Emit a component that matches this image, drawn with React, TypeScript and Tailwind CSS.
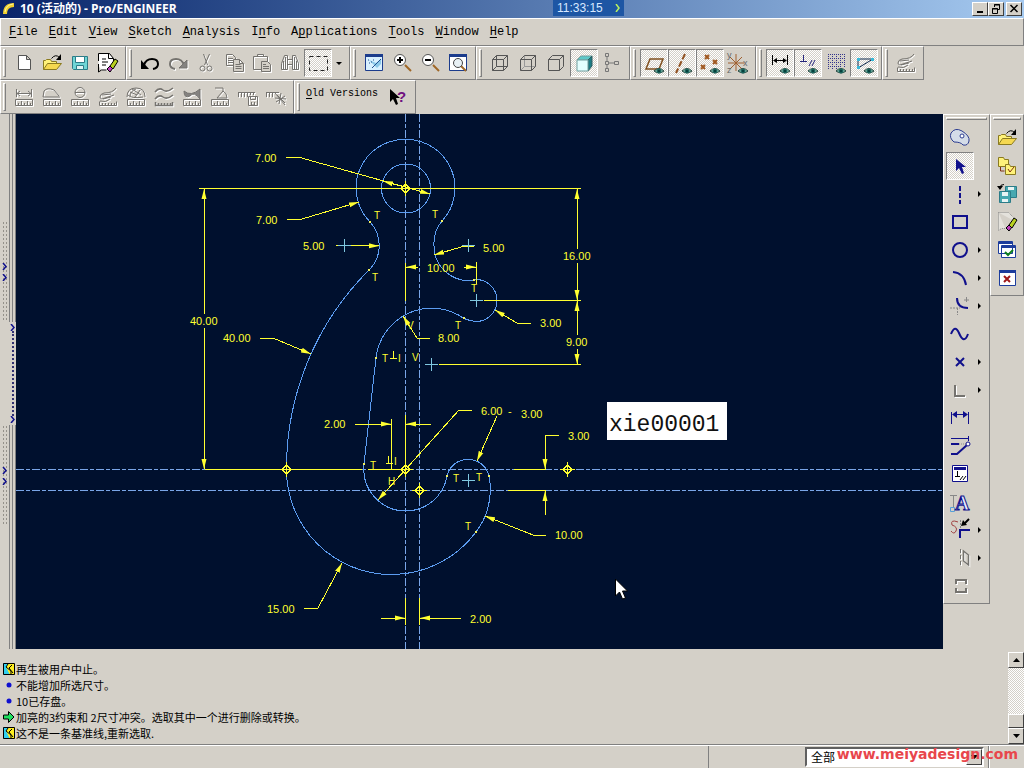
import type { ReactNode } from 'react';
import clsx from 'clsx';

type Tool = { label: string; icon: ReactNode; pressed?: boolean; disabled?: boolean; more?: boolean };

const DITHER = 'bg-[repeating-conic-gradient(#fff_0_25%,#d4d0c8_0_50%)] bg-[length:2px_2px]';
const RAISED = 'border border-t-white border-l-white border-r-[#404040] border-b-[#404040] bg-[#d4d0c8]';
const NAVY = '#10108c';

const ruler = (
    <>
        <path d="M5.5 16.5h17v6h-17z" />
        <path d="M8.5 20v2M11.5 18v4M14.5 20v2M17.5 18v4M20.5 20v2" />
    </>
);

const eye = (
    <>
        <path d="M14 22q5-5 10 0q-5 4-10 0" fill="#7fb8a8" stroke="#24463f" />
        <circle cx="19" cy="22" r="2" fill="#06403c" stroke="#1e6e66" />
    </>
);

const folder = (
    <>
        <path d="M5.5 20.5v-9h2l1-1h4l1 2h5v3" fill="#fff27a" stroke="#8a7a20" />
        <path d="M5.5 20.5l4-6h14l-5 6z" fill="#f5d850" stroke="#8a7a20" />
    </>
);

const curvedArrow = (
    <>
        <path d="M13.5 9.5q4-5 8-1" fill="none" stroke="#000" />
        <path d="M23 5v6h-5z" fill="#000" stroke="none" />
    </>
);

const eraser = (
    <>
        <path d="M13 20l3-3 3 2-3 4z" fill="#c040c0" stroke="#000" />
        <path d="M16 17l5-7 3 2-5 8z" fill="#b8d020" stroke="#000" />
    </>
);

const fileTools: Tool[] = [
    { label: 'New', icon: <path d="M8.5 6.5h8l4 4v10h-12zM16.5 6.5v4h4" fill="#fff" stroke="#555" /> },
    { label: 'Open', icon: <>{folder}{curvedArrow}</> },
    {
        label: 'Save',
        icon: (
            <>
                <path d="M6.5 7.5h15v13h-14l-1-1z" fill="#6fd6d6" stroke="#2c7c88" />
                <path d="M9.5 7.5h9v6h-9z" fill="#fff" stroke="#2c7c88" />
                <path d="M10.5 16.5h7v4h-7z" fill="#e0f4f4" stroke="#2c7c88" />
            </>
        ),
    },
    {
        label: 'Erase Not Displayed',
        icon: (
            <>
                <path d="M4.5 4.5h10l5 5v12h-12l-3-5z" fill="#fff" stroke="none" />
                <path d="M4.5 12v-7.5h11l4 5v3M14.5 4.5v5h5M4.5 15v8l3-2h5M8 10h4M8 13h6M8 16h4" fill="none" stroke="#000" />
                {eraser}
            </>
        ),
    },
];

const editTools: Tool[] = [
    {
        label: 'Undo',
        icon: (
            <>
                <path d="M8 16q2-6 8-6q6 0 6 5q0 4-5 5" fill="none" stroke="#000" strokeWidth="2" />
                <path d="M5 11v9h8z" fill="#000" stroke="none" />
            </>
        ),
    },
    {
        label: 'Redo',
        disabled: true,
        icon: (
            <>
                <path d="M20 16q-2-6-8-6q-6 0-6 5q0 4 5 5" strokeWidth="2" />
                <path d="M23 11v8h-8z" fill="#848280" />
            </>
        ),
    },
    {
        label: 'Cut',
        disabled: true,
        icon: (
            <>
                <path d="M11.5 5l4 11M17.5 5l-5 11" />
                <circle cx="10.5" cy="19.5" r="2.5" />
                <circle cx="17.5" cy="19.5" r="2.5" />
            </>
        ),
    },
    {
        label: 'Copy',
        disabled: true,
        icon: (
            <>
                <path d="M6.5 5.5h6l3 3v8h-9zM8 9.5h5M8 11.5h5M8 13.5h5" />
                <path d="M13.5 10.5h6l4 4v8h-10zM19.5 10.5v4h4M15.5 15.5h5M15.5 17.5h6M15.5 19.5h6" fill="#d4d0c8" />
            </>
        ),
    },
    {
        label: 'Paste',
        disabled: true,
        icon: (
            <>
                <path d="M5.5 7.5h14v13h-14zM9.5 7.5v-2h6v2z" />
                <path d="M13.5 12.5h6l3 3v7h-9zM15 15.5h3M15 17.5h6M15 19.5h6" fill="#d4d0c8" />
            </>
        ),
    },
    {
        label: 'Find',
        disabled: true,
        icon: (
            <>
                <path d="M5.5 20.5v-6l3-8h3v14zM22.5 20.5v-6l-3-8h-3v14zM11.5 10.5h5v5h-5z" />
                <path d="M7.5 12v8M9.5 8v12M20.5 12v8M18.5 8v12" />
            </>
        ),
    },
    {
        label: 'Select Box',
        pressed: true,
        icon: <path d="M5.5 7.5h18v14h-18z" fill="none" stroke="#222" strokeDasharray="4 3" />,
    },
];

const magnifier = (
    <>
        <path d="M17 16l6 6" stroke="#a06828" strokeWidth="2" />
        <circle cx="12" cy="11" r="5.5" fill="#fff" stroke="#555" />
    </>
);

const viewTools: Tool[] = [
    {
        label: 'Repaint',
        icon: (
            <>
                <path d="M5.5 5.5h17v16h-17z" fill="#d8f0ff" stroke="#1c3c8c" />
                <path d="M5 5h18v3h-18z" fill="#1c3c8c" stroke="none" />
                <path d="M9 11l8 8 4-4v-5l-5 4z" fill="#8cc8e8" stroke="none" />
                <path d="M21 10l-9 9M8 11h1M11 13h1M9 14h1M13 11h1" stroke="#205090" />
            </>
        ),
    },
    { label: 'Zoom In', icon: <>{magnifier}<path d="M9 11h6M12 8v6" stroke="#000" strokeWidth="2" /></> },
    { label: 'Zoom Out', icon: <>{magnifier}<path d="M9 11h6" stroke="#000" strokeWidth="2" /></> },
    {
        label: 'Refit',
        icon: (
            <>
                <path d="M5.5 5.5h17v16h-17z" fill="#fff" stroke="#1c3c8c" />
                <path d="M5 5h18v3h-18z" fill="#1c3c8c" stroke="none" />
                <path d="M17 17l5 5" stroke="#a06828" strokeWidth="2" />
                <circle cx="14" cy="14" r="4.5" fill="#e8f0f4" stroke="#444" />
            </>
        ),
    },
];

const cube = 'M6.5 10.5h11v11h-11zM6.5 10.5l4-4h11v11l-4 4M17.5 10.5l4-4';

const displayTools: Tool[] = [
    { label: 'Wireframe', icon: <path d={cube + 'M10.5 6.5v11h11M10.5 17.5l-4 4'} fill="none" stroke="#555" /> },
    {
        label: 'Hidden Line',
        icon: (
            <>
                <path d="M10.5 6.5v11h11M10.5 17.5l-4 4" fill="none" stroke="#999" />
                <path d={cube} fill="none" stroke="#555" />
            </>
        ),
    },
    { label: 'No Hidden', icon: <path d={cube} fill="none" stroke="#555" /> },
    {
        label: 'Shading',
        pressed: true,
        icon: (
            <>
                <path d="M7 11l4-4h11l-4 4z" fill="#5cc8c8" stroke="#70a0a0" />
                <path d="M18 11l4-4v10l-4 5z" fill="#1c7c84" stroke="#305c60" />
                <path d="M7 11h11v11h-11z" fill="#e4ffff" stroke="#70a0a0" />
            </>
        ),
    },
    {
        label: 'Model Tree',
        icon: (
            <path
                d="M7.5 4.5h3v3h-3zM7.5 12.5h3v3h-3zM7.5 19.5h3v3h-3zM16.5 12.5h4v3h-4zM9 7.5v5M9 15.5v4M10.5 14h6"
                fill="none"
                stroke="#777"
            />
        ),
    },
];

const datumTools: Tool[] = [
    { label: 'Datum Planes', pressed: true, icon: <><path d="M10 10h13l-4 10h-13z" fill="none" stroke="#805020" strokeWidth="1.5" />{eye}</> },
    { label: 'Datum Axes', pressed: true, icon: <><path d="M17 5l-9 19" stroke="#905020" strokeWidth="2" strokeDasharray="6 2" />{eye}</> },
    {
        label: 'Datum Points',
        pressed: true,
        icon: (
            <>
                <path d="M9 6l4 4M13 6l-4 4M17 11l4 4M21 11l-4 4M5 16l4 4M9 16l-4 4" stroke="#a05820" strokeWidth="2" />
                {eye}
            </>
        ),
    },
    {
        label: 'Coordinate Systems',
        icon: (
            <>
                <path d="M12 5v17M4 14h16M6 8l12 12M18 8l-12 12" stroke="#a06030" />
                <g fill="#666" stroke="none" fontSize="9" fontFamily="Liberation Sans">
                    <text x="3" y="9">y</text>
                    <text x="19" y="17">x</text>
                    <text x="3" y="24">z</text>
                </g>
                {eye}
            </>
        ),
    },
];

const sketchTools: Tool[] = [
    {
        label: 'Dimensions',
        pressed: true,
        icon: (
            <>
                <path d="M6.5 6v10M21.5 6v10M8 11.5h12" stroke="#000" />
                <path d="M7 11.5l4-2.5v5zM21 11.5l-4-2.5v5z" fill="#000" stroke="none" />
                {eye}
            </>
        ),
    },
    { label: 'Constraints', pressed: true, icon: <><path d="M9.5 6v7M6 12.5h7M15 17l3-6M18 17l3-6" stroke="#26267c" />{eye}</> },
    {
        label: 'Grid',
        icon: (
            <>
                <path d="M6 5.5h17M6 9.5h17M6 13.5h17M6 17.5h13M6.5 5v16M10.5 5v16M14.5 5v16M18.5 5v13M22.5 5v13" stroke="#33338c" strokeDasharray="1 1" />
                {eye}
            </>
        ),
    },
    {
        label: 'Vertices',
        pressed: true,
        icon: (
            <>
                <path d="M8 10h15l-15 9z" fill="none" stroke="#102c50" />
                <path d="M7 9h3v3h-3zM21 9h3v3h-3zM7 17h3v3h-3z" fill="#38b8d8" stroke="none" />
                {eye}
            </>
        ),
    },
];

const curveRuler = (
    <>
        <path d="M6 18q6 2 10-2M22 5q-3 5-12 5q-4 1-4 4q0 3 5 1l9-3M8 12l9-1M9 16l8-2" />
        <path d="M5.5 18.5v4h17v-4M8.5 20v2M11.5 20v2M14.5 20v2M17.5 20v2M20.5 20v2" />
    </>
);

const analyseTools: Tool[] = [{ label: 'Curve Analysis', disabled: true, icon: curveRuler }];

const measureTools: Tool[] = [
    { label: 'Distance', disabled: true, icon: <><path d="M6.5 6v8M21.5 6v8M7 10.5h14M10 8l-3 2.5 3 2.5M18 8l3 2.5-3 2.5" />{ruler}</> },
    { label: 'Angle', disabled: true, icon: <><path d="M5 14h17M6 8q3-4 10-1l5 6M6 8l-1 6" />{ruler}</> },
    { label: 'Diameter', disabled: true, icon: <><circle cx="14" cy="9.5" r="5" /><path d="M9 9.5h10" />{ruler}</> },
    { label: 'Curvature', disabled: true, icon: curveRuler },
    { label: 'Sections', disabled: true, icon: <><path d="M5 14q0-9 9-9q9 0 9 9M8 14q0-6 6-8M12 15q4-4 6-8M8 9l7 3M10 6l9 6M6 12q4 4 15 2" />{ruler}</> },
    { label: 'Offset', disabled: true, icon: <path d="M5 9q4-5 8-2t10-2M5 16q4-5 8-2t10-2M5.5 19v3.5h17v-3.5M8.5 20v2M11.5 20v2M14.5 20v2M17.5 20v2M20.5 20v2" strokeWidth="1.5" /> },
    { label: 'Draft', disabled: true, icon: <><path d="M6 8q7 6 16-2v10q-6-8-10-3q-6 3-6-5" fill="#848280" />{ruler}</> },
    { label: 'Slope', disabled: true, icon: <><path d="M9 5h8v3l-6 7h10M17 8q4 2 4 7" />{ruler}</> },
    { label: 'Save Analysis', disabled: true, icon: <path d="M4 9.5h17M4.5 9v5M7.5 9v5M10.5 9v5M13.5 9v5M16.5 9v3M19.5 9v3M14.5 13.5h9v9h-9zM16.5 13.5v3h5v-3M17.5 19v3h3v-3" /> },
    { label: 'Hide Analysis', disabled: true, icon: <path d="M4 9.5h13M4.5 9v5M7.5 9v5M10.5 9v5M13 10l10 12M19 10l-2 11M13 15l11 1M15 12l8 8M14 19l9-6" /> },
];

const drawTools: Tool[] = [
    {
        label: 'Toggle Construction',
        icon: (
            <>
                <path d="M8 18q-5-4-3-9q4-6 11-2q8 5 7 10q-1 5-6 4q-2-3-9-3" fill="#d4dce8" stroke="#2c3c90" />
                <circle cx="16" cy="12" r="2" fill="#fff" stroke="#2c3c90" />
            </>
        ),
    },
    { label: 'Select', pressed: true, icon: <path d="M10 7v12l3-3 3 6 2-1-2-6h4z" fill={NAVY} stroke="none" /> },
    { label: 'Line', more: true, icon: <path d="M14 6v18" stroke={NAVY} strokeWidth="2" strokeDasharray="5 2" /> },
    { label: 'Rectangle', icon: <path d="M7 8h14v12h-14z" fill="none" stroke={NAVY} strokeWidth="2" /> },
    { label: 'Circle', more: true, icon: <circle cx="14" cy="14" r="7" fill="none" stroke={NAVY} strokeWidth="2" /> },
    { label: 'Arc', more: true, icon: <path d="M7 8q11 1 13 13" fill="none" stroke={NAVY} strokeWidth="2" /> },
    {
        label: 'Fillet',
        more: true,
        icon: (
            <>
                <path d="M4 16h10M11.5 16v7" fill="none" stroke="#888" strokeDasharray="2 1" />
                <path d="M18 8h5M20.5 5v5" stroke="#888" />
                <path d="M11 6q0 10 11 10" fill="none" stroke={NAVY} strokeWidth="2" />
            </>
        ),
    },
    { label: 'Spline', icon: <path d="M5 14q4-10 8-1q5 12 9 1" fill="none" stroke={NAVY} strokeWidth="2" /> },
    { label: 'Point', more: true, icon: <path d="M10 10l8 8M18 10l-8 8" stroke={NAVY} strokeWidth="2" /> },
    { label: 'Use Edge', more: true, disabled: true, icon: <path d="M9 9v11h10" strokeWidth="2" /> },
    {
        label: 'Dimension',
        icon: (
            <>
                <path d="M5.5 8v12M22.5 8v12M7 10.5h14" stroke={NAVY} />
                <path d="M6 10.5l5-3.5v7zM22 10.5l-5-3.5v7z" fill={NAVY} stroke="none" />
            </>
        ),
    },
    {
        label: 'Modify',
        icon: (
            <>
                <path d="M5 6.5h17M22.5 4v5" stroke={NAVY} />
                <path d="M5 12h8M5 22h6l10-9" fill="none" stroke={NAVY} strokeWidth="2" />
                <path d="M13 12h8" stroke="#888" strokeDasharray="1 1" />
                <circle cx="22" cy="12" r="2" fill="#fff" stroke={NAVY} />
            </>
        ),
    },
    {
        label: 'Constrain',
        icon: (
            <>
                <path d="M6.5 5.5h15v16h-15z" fill="#fff" stroke={NAVY} />
                <path d="M8 7h12v3h-12z" fill={NAVY} stroke="none" />
                <path d="M11.5 11v5M9 16.5h5M14 20l3-4M17 20l3-4" stroke="#000" />
            </>
        ),
    },
    {
        label: 'Text',
        icon: (
            <>
                <path d="M4 7.5h7M7.5 7v13" stroke="#888" />
                <path d="M4.5 19.5h4v4h-4z" fill="none" stroke="#58a0d8" />
                <text x="9" y="22" fontSize="20" fontFamily="Liberation Serif" fontWeight="bold" fill="#e8ecff" stroke={NAVY}>A</text>
            </>
        ),
    },
    {
        label: 'Trim',
        more: true,
        icon: (
            <>
                <path d="M12 6q-8-3-6 3q6 2 4 6q-2 4-5 0" fill="none" stroke="#a04040" />
                <path d="M14 22v-8M13 14h11" stroke={NAVY} strokeWidth="2" />
                <path d="M14.5 4v8" stroke="#888" strokeDasharray="2 1" />
                <path d="M23 3l-5 5" stroke="#000" strokeWidth="2" />
                <path d="M15 10l2-6 4 5z" fill="#000" stroke="none" />
            </>
        ),
    },
    {
        label: 'Mirror',
        more: true,
        disabled: true,
        icon: <><path d="M14.5 5v18" strokeDasharray="4 2" /><path d="M17.5 7v10l5 4v-10z" strokeWidth="1.5" /></>,
    },
    { label: 'Group', disabled: true, icon: <path d="M10 12v-4h10v4M10 16v4h10v-4" strokeWidth="2" /> },
];

const windowTools: Tool[] = [
    { label: 'Open File', icon: <>{folder}{curvedArrow}</> },
    {
        label: 'Working Directory',
        icon: (
            <>
                <path d="M5.5 5.5h5l1 2h4v7h-10z" fill="#fff27a" stroke="#8a7a20" />
                <path d="M12.5 12.5h4l1 2h5v8h-10z" fill="#fff27a" stroke="#8a7a20" />
                <path d="M15 17l2 3 4-5M7.5 15v4h4" fill="none" stroke="#803010" />
            </>
        ),
    },
    {
        label: 'Save Copy',
        icon: (
            <>
                <path d="M12.5 6.5h11v11h-11z" fill="#48a8b0" stroke="#2c7c88" />
                <path d="M6.5 11.5h11v11h-11z" fill="#48a8b0" stroke="#2c7c88" />
                <path d="M9 12h6v4h-6zM9 19h6v3h-6zM15 7h6v3h-6z" fill="#e8f4f4" stroke="none" />
                <path d="M11 4.5q-4 0-4 3" fill="none" stroke="#000" />
                <path d="M4 6h6l-3 4z" fill="#000" stroke="none" />
            </>
        ),
    },
    {
        label: 'Erase Current',
        icon: (
            <>
                <path d="M5.5 4.5h10l5 5v3M5.5 4.5v18l3-2h4" fill="#e4e2dc" stroke="#888" strokeDasharray="1 1" />
                {eraser}
            </>
        ),
    },
    {
        label: 'Activate Window',
        icon: (
            <>
                <path d="M5.5 5.5h14v12h-14zM8.5 9.5h14v12h-14z" fill="#fff" stroke="#1c3c9c" />
                <path d="M6 6h13v2h-13zM9 10h13v2h-13z" fill="#1c3c9c" stroke="none" />
                <path d="M12 16l3 3 5-5" fill="none" stroke="#108020" strokeWidth="2" />
            </>
        ),
    },
    {
        label: 'Close Window',
        icon: (
            <>
                <path d="M6.5 6.5h16v15h-16z" fill="#fff" stroke="#1c3c9c" />
                <path d="M6 6h17v3h-17z" fill="#1c3c9c" stroke="none" />
                <path d="M11 12l6 6M17 12l-6 6" stroke="#a01818" strokeWidth="2" />
            </>
        ),
    },
];

function ToolButton({ tool }: { tool: Tool }) {
    return (
        <button
            type="button"
            aria-label={tool.label}
            disabled={tool.disabled}
            className={clsx(
                'h-7 w-7 shrink-0',
                tool.pressed && 'border border-t-[#808080] border-l-[#808080] border-r-white border-b-white',
                tool.pressed && DITHER,
            )}
        >
            <svg
                viewBox="0 0 28 28"
                className={clsx('h-7 w-7', tool.pressed && '-m-px', tool.disabled && 'drop-shadow-[1px_1px_0_#fff]')}
                fill="none"
                stroke="#75736f"
            >
                {tool.icon}
            </svg>
        </button>
    );
}

function ToolGroup({ tools, children }: { tools?: Tool[]; children?: ReactNode }) {
    return (
        <div className="flex h-[34px] shrink-0 items-center border border-t-white border-l-white border-r-[#808080] border-b-[#808080] pr-[3px] pl-0.5">
            <span className="mr-1 h-7 w-[3px] border border-t-white border-l-white border-r-[#808080] border-b-[#808080]" />
            {tools?.map((tool) => <ToolButton tool={tool} key={tool.label} />)}
            {children}
        </div>
    );
}

function SideBar({ tools, className }: { tools: Tool[]; className: string }) {
    return (
        <div className={clsx('flex shrink-0 flex-col self-start border border-t-white border-l-white border-r-[#808080] border-b-[#808080] px-0.5 pt-0.5 pb-[3px]', className)}>
            <span className="mb-1 h-[3px] border border-t-white border-l-white border-r-[#808080] border-b-[#808080]" />
            {tools.map((tool) => (
                <div className="flex items-center" key={tool.label}>
                    <ToolButton tool={tool} />
                    {tool.more && (
                        <svg viewBox="0 0 4 6" className="ml-1 h-1.5 w-1">
                            <path d="M0 0l3 3-3 3z" />
                        </svg>
                    )}
                </div>
            ))}
        </div>
    );
}

// [before, mnemonic, after]
const menus = [
    ['', 'F', 'ile'],
    ['', 'E', 'dit'],
    ['', 'V', 'iew'],
    ['', 'S', 'ketch'],
    ['', 'A', 'nalysis'],
    ['I', 'n', 'fo'],
    ['A', 'p', 'plications'],
    ['', 'T', 'ools'],
    ['', 'W', 'indow'],
    ['', 'H', 'elp'],
];

const dimensions: [number, number, string][] = [
    [255, 162, '7.00'],
    [256, 224, '7.00'],
    [303, 250, '5.00'],
    [483, 252, '5.00'],
    [427, 272, '10.00'],
    [563, 260, '16.00'],
    [540, 327, '3.00'],
    [438, 342, '8.00'],
    [566, 346, '9.00'],
    [190, 325, '40.00'],
    [223, 342, '40.00'],
    [324, 428, '2.00'],
    [481, 415, '6.00'],
    [508, 415, '-'],
    [521, 418, '3.00'],
    [568, 440, '3.00'],
    [555, 539, '10.00'],
    [267, 613, '15.00'],
    [470, 623, '2.00'],
];

const constraints: [number, number, string][] = [
    [374, 219, 'T'],
    [432, 218, 'T'],
    [372, 281, 'T'],
    [471, 292, 'T'],
    [455, 329, 'T'],
    [382, 362, 'T'],
    [398, 362, 'I'],
    [407, 329, 'V'],
    [412, 361, 'V'],
    [370, 469, 'T'],
    [394, 465, 'I'],
    [388, 485, 'H'],
    [453, 482, 'T'],
    [476, 481, 'T'],
    [465, 530, 'T'],
];

const leaders = [
    '286,157 298,157 430,194',
    '400,186 383,181',
    '287,219 302,219 359,202',
    '335,245 379,246',
    '474,246 461,247 434,255',
    '531,323 517,323 495,310',
    '430,338 417,338 403,316',
    '260,338 273,338 311,354',
    '355,424 391,424',
    '431,424 406,424',
    '472,410 459,410 378,500',
    '497,416 477,461',
    '559,435 545,435 545,469',
    '545,515 545,491',
    '546,535 533,535 485,516',
    '304,608 318,608 342,563',
    '381,618 405,618',
    '461,618 420,618',
    '418,267 406,267',
    '464,267 476,267',
    '204,314 204,189',
    '204,328 204,469',
    '577,249 577,189',
    '577,263 577,300',
    '577,335 577,301',
    '577,349 577,364',
];

const centres = [[405, 188], [286, 469], [405, 469], [419, 490], [567, 469]];
const crosses = [[344, 245], [468, 245], [476, 300], [431, 364], [468, 480]];
const joints = [[370, 222], [442, 221], [369, 270], [474, 280], [464, 318], [376, 358], [364, 464], [447, 476], [489, 476], [476, 532]];

const outline = [
    'M370 222A48.5 48.5 0 0 1 406 139.5A48.5 48.5 0 0 1 442 221',
    'A34.5 34.5 0 0 0 434 245.5A34.5 34.5 0 0 0 474 280L476 279.5',
    'A21 21 0 0 1 476 321.5Q470 321 464 318.5',
    'A56 56 0 0 0 376 358L364 464',
    'A42 42 0 0 0 406 511A42 42 0 0 0 447 476',
    'A21 21 0 0 1 468 459.5A21 21 0 0 1 489 476',
    'A70 70 0 0 1 476 532A105 105 0 0 1 391.5 574.5A105 105 0 0 1 286.5 469',
    'A280 280 0 0 1 369 270A34.5 34.5 0 0 0 370 222',
].join('');

function SketchCanvas() {
    return (
        <svg
            viewBox="16 114 927 535"
            preserveAspectRatio="xMinYMin slice"
            className="h-full min-w-0 flex-1 bg-[#00102e]"
            fill="none"
            shapeRendering="crispEdges"
        >
            <defs>
                <marker id="arrow" markerUnits="userSpaceOnUse" markerWidth="12" markerHeight="6" refX="10" refY="3" orient="auto">
                    <path d="M0 .5v5l10-2.500z" fill="#ffff30" shapeRendering="auto" />
                </marker>
            </defs>
            <path d="M16 469.5h927M16 490.5h927M405.5 114v535M419.5 114v535" stroke="#7aa6e8" strokeDasharray="8 2 4 2" />
            <g stroke="#5c9cf0">
                <circle cx="406" cy="188.5" r="24.5" />
                <path d={outline} />
            </g>
            <g stroke="#ffff30">
                <path d="M199 188.5h382M205 469.5h157M368 469.5h30M484 300.5h97M439 364.5h142M476.5 262v22M405.5 263v38M391.5 419v50M405.5 415v50M514 469.5h32M508 490.5h38M405.5 598v27M419.5 598v27" />
                {leaders.map((points) => <polyline points={points} markerEnd="url(#arrow)" key={points} />)}
                <path d="M393.5 351v7M390 358.5h7M388.500 456v7M386 463.5h7" />
                {centres.map(([x, y]) => (
                    <path d={`M${x + 0.5} ${y - 4}l4.5 4.5-4.5 4.5-4.5-4.5zM${x - 7} ${y}.5h15M${x}.5 ${y - 7}v15`} key={x} />
                ))}
            </g>
            {crosses.map(([x, y]) => (
                <path d={`M${x - 6} ${y}.5h13M${x}.5 ${y - 6}v13`} stroke="#80c8e0" key={`${x}-${y}`} />
            ))}
            <g fill="#f0f060">
                {joints.map(([x, y]) => <rect x={x - 1} y={y - 1} width="2" height="2" key={`${x}-${y}`} />)}
            </g>
            <g fill="#ffff30" fontFamily="'Liberation Sans', sans-serif" fontSize="11">
                {dimensions.map(([x, y, value]) => <text x={x} y={y} key={`${x}-${y}`}>{value}</text>)}
            </g>
            <g fill="#ffff30" fontFamily="'Liberation Sans', sans-serif" fontSize="10">
                {constraints.map(([x, y, value]) => <text x={x} y={y} key={`${x}-${y}`}>{value}</text>)}
            </g>
            <rect x="607" y="402" width="120" height="38" fill="#fff" />
            <text x="609" y="431" fill="#111" fontFamily="'Liberation Mono', monospace" fontSize="23">xie00001</text>
            <path d="M615.5 579v17l4-4 3 7 3-1-3-7h5z" fill="#fff" stroke="#000" shapeRendering="auto" />
        </svg>
    );
}

function Chevron() {
    return (
        <svg viewBox="0 0 5 7" className="h-[7px] w-[5px] shrink-0" fill="none" stroke={NAVY} strokeWidth="1.5">
            <path d="M1 0l3 3.5-3 3.5" />
        </svg>
    );
}

function DottedHandle() {
    return (
        <div className="flex h-[101px] w-1.5 flex-col items-center justify-center gap-1 bg-[radial-gradient(#94918a_1px,transparent_1px)] bg-[length:3px_4px]">
            <Chevron />
            <Chevron />
        </div>
    );
}

function LeftSash() {
    return (
        <div className="flex w-4 shrink-0">
            <div className="flex flex-1 flex-col items-center gap-[103px] pt-[107px]">
                <DottedHandle />
                <DottedHandle />
            </div>
            <div className="flex w-[7px] flex-col">
                <div className="h-52 border-x border-[#808080] px-0.5"><div className="h-full border-l border-[#808080]" /></div>
                <div className="flex h-[103px] flex-col items-center justify-between py-0.5">
                    <Chevron />
                    <span className="flex-1 border-l-2 border-dotted border-[#303070]" />
                    <Chevron />
                </div>
                <div className="flex-1 border-x border-[#808080] px-0.5"><div className="h-full border-l border-[#808080]" /></div>
            </div>
        </div>
    );
}

const warning = (
    <svg viewBox="0 0 12 12" className="h-3 w-3">
        <path d="M0 0h12v12h-12z" fill="#ffee20" />
        <path d="M0 0h6l-3 4 4 8h-7z" fill="#30d0f0" />
        <path d="M.5.5h11v11h-11zM5 1l-2 3 5 4v3M9 2l-3 3 4 5" fill="none" stroke="#000" />
    </svg>
);
const bullet = (
    <svg viewBox="0 0 12 12" className="h-3 w-3">
        <circle cx="6" cy="6" r="2.5" fill="#1010d0" />
    </svg>
);
const prompt = (
    <svg viewBox="0 0 12 12" className="h-3 w-3">
        <path d="M.5 4h5v-3.500l5.5 5.5-5.5 5.5v-3.500h-5z" fill="#20e060" stroke="#000" />
    </svg>
);

const messages = [
    { icon: warning, text: '再生被用户中止。' },
    { icon: bullet, text: '不能增加所选尺寸。' },
    { icon: bullet, text: '10已存盘。' },
    { icon: prompt, text: '加亮的3约束和 2尺寸冲突。选取其中一个进行删除或转换。' },
    { icon: warning, text: '这不是一条基准线,重新选取.' },
];

function ScrollBar() {
    return (
        <div className={clsx('mt-[3px] flex w-4 flex-col', DITHER)}>
            <button type="button" aria-label="Scroll up" className={clsx('flex h-4 items-center justify-center', RAISED)}>
                <svg viewBox="0 0 7 4" className="h-1 w-[7px]"><path d="M0 4l3.5-4 3.5 4z" /></svg>
            </button>
            <div className="flex-1" />
            <div className={clsx('h-3.5', RAISED)} />
            <button type="button" aria-label="Scroll down" className={clsx('flex h-4 items-center justify-center', RAISED)}>
                <svg viewBox="0 0 7 4" className="h-1 w-[7px]"><path d="M0 0l3.5 4 3.5-4z" /></svg>
            </button>
        </div>
    );
}

export default function App() {
    return (
        <div className="flex h-screen flex-col overflow-hidden bg-[#d4d0c8] font-['Liberation_Mono','Noto_Sans_CJK_SC',monospace] text-xs text-black">
            <header className="relative flex h-[18px] shrink-0 items-center bg-linear-to-r from-[#0a246a] to-[#a6caf0] px-0.5">
                <svg viewBox="0 0 16 16" className="mr-0.5 h-4 w-4" fill="none">
                    <path d="M3 13q0-9 9-9" stroke="#f0d030" strokeWidth="4" />
                    <path d="M3 11q1-7 8-8" stroke="#fff8a0" />
                </svg>
                <h1 className="font-['Open_Sans','Noto_Sans_CJK_SC',sans-serif] text-xs font-bold text-white">10 (活动的) - Pro/ENGINEER</h1>
                <div className="absolute top-0 left-[54%] flex h-4 items-center gap-3 bg-[#1d56a4] px-1 font-['Liberation_Sans',sans-serif] text-[#d8e8ff]">
                    <span>11:33:15</span>
                    <svg viewBox="0 0 5 8" className="h-2 w-[5px]" fill="none" stroke="#b8f060" strokeWidth="1.5"><path d="M1 0l3 4-3 4" /></svg>
                </div>
                <div className="ml-auto flex">
                    <button type="button" aria-label="Minimize" className={clsx('h-3.5 w-4', RAISED)}>
                        <svg viewBox="0 0 14 12" className="h-3 w-3.5"><path d="M4 8h6v2h-6z" /></svg>
                    </button>
                    <button type="button" aria-label="Restore" className={clsx('h-3.5 w-4', RAISED)}>
                        <svg viewBox="0 0 14 12" className="h-3 w-3.5" fill="none" stroke="#000"><path d="M5.5 4v-2.500h5v5h-2M5 2h6M3.5 5.5h5v5h-5zM3 6h6" /></svg>
                    </button>
                    <button type="button" aria-label="Close" className={clsx('ml-0.5 h-3.5 w-4', RAISED)}>
                        <svg viewBox="0 0 14 12" className="h-3 w-3.5" stroke="#000" strokeWidth="1.5"><path d="M3.5 2l7 7M10.5 2l-7 7" /></svg>
                    </button>
                </div>
            </header>

            <nav className="flex h-7 shrink-0 items-center gap-[11px] border border-t-white border-l-white border-r-[#808080] border-b-[#808080] px-2">
                {menus.map(([before, key, after]) => (
                    <button type="button" key={before + key + after}>
                        {before}
                        <u className="underline-offset-2">{key}</u>
                        {after}
                    </button>
                ))}
            </nav>

            <div className="flex shrink-0">
                <ToolGroup tools={fileTools} />
                <ToolGroup tools={editTools}>
                    <button type="button" aria-label="Selection options" className="flex h-7 w-3.5 items-center justify-center">
                        <svg viewBox="0 0 6 3" className="h-[3px] w-1.5"><path d="M0 0h6l-3 3z" /></svg>
                    </button>
                </ToolGroup>
                <ToolGroup tools={viewTools} />
                <ToolGroup tools={displayTools} />
                <ToolGroup tools={datumTools} />
                <ToolGroup tools={sketchTools} />
                <ToolGroup tools={analyseTools} />
            </div>
            <div className="flex shrink-0">
                <ToolGroup tools={measureTools} />
                <ToolGroup>
                    <button type="button" className="mr-1 mb-1.5 px-0.5 text-[10px]">
                        <u className="underline-offset-2">O</u>ld Versions
                    </button>
                    <button type="button" aria-label="Context help" className="h-7 w-7">
                        <svg viewBox="0 0 28 28" className="h-7 w-7">
                            <path d="M6 6v13l3-3 3 6 2-1-2-6h4z" />
                            <text x="13" y="19" fontSize="15" fontWeight="bold" fontFamily="Liberation Sans" fill="#701080">?</text>
                        </svg>
                    </button>
                </ToolGroup>
            </div>

            <main className="flex min-h-0 flex-1">
                <LeftSash />
                <SketchCanvas />
                <SideBar tools={drawTools} className="w-[47px]" />
                <SideBar tools={windowTools} className="w-[34px]" />
            </main>

            <section className="flex h-24 shrink-0 justify-between border-b border-[#808080]">
                <ul className="pt-3 pl-[3px] font-['Noto_Sans_CJK_SC',sans-serif] text-[11px]">
                    {messages.map((message) => (
                        <li className="flex h-4 items-center gap-px leading-4" key={message.text}>
                            {message.icon}
                            {message.text}
                        </li>
                    ))}
                </ul>
                <ScrollBar />
            </section>

            <footer className="relative flex h-[23px] shrink-0 items-center justify-end border-t border-white">
                <span className="mr-24 h-full border-l border-[#808080] shadow-[inset_1px_0_0_#fff]" />
                <label className="flex h-5 w-[179px] items-center border-2 border-t-[#606060] border-l-[#606060] border-r-white border-b-white bg-white">
                    <select aria-label="Selection filter" className="h-full min-w-0 flex-1 appearance-none pl-1 font-['Noto_Sans_CJK_SC',sans-serif] text-xs leading-4">
                        <option>全部</option>
                    </select>
                    <span className={clsx('flex h-4 w-4 items-center justify-center', RAISED)}>
                        <svg viewBox="0 0 7 4" className="h-1 w-[7px]"><path d="M0 0l3.5 4 3.5-4z" /></svg>
                    </span>
                </label>
                <span className="ml-1 h-full w-9 border-l border-[#808080] shadow-[inset_1px_0_0_#fff]" />
                <a href="#site" className="absolute top-0 right-1.5 font-['DejaVu_Sans',sans-serif] text-sm leading-4 font-bold text-[#e8464c]">
                    www.meiyadesign.com
                </a>
            </footer>
        </div>
    );
}
